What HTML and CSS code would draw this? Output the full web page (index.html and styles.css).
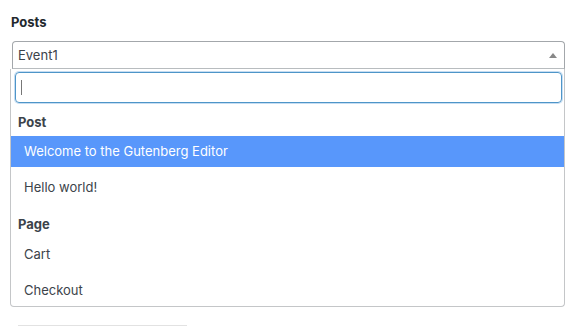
FILE: index.html
```html
<!DOCTYPE html>
<html>
<head>
<meta charset="utf-8">
<link rel="stylesheet" href="styles.css">
</head>
<body>
<div class="field">
  <div class="label">Posts</div>
  <div class="select">
    <span class="value">Event1</span>
    <span class="arrow"></span>
  </div>
  <div class="dropdown">
    <div class="search"><span class="caret"></span></div>
    <div class="group">Post</div>
    <div class="option active">Welcome to the Gutenberg Editor</div>
    <div class="option">Hello world!</div>
    <div class="group group-2">Page</div>
    <div class="option">Cart</div>
    <div class="option">Checkout</div>
  </div>
  <div class="next"></div>
</div>
</body>
</html>
```
FILE: styles.css
```css
html, body {
  margin: 0;
  padding: 0;
  background: #fff;
  font-family: Inter, "Liberation Sans", sans-serif;
  font-size: 13px;
  color: #444;
}
.field {
  padding: 14px 10px 0 10px;
  width: 555px;
}
.label {
  font-weight: 700;
  color: #23282d;
  line-height: 16px;
  padding-left: 1px;
}
.select {
  margin: 11px 0 0 2px;
  height: 26px;
  border: 1px solid #a3a7ab;
  border-bottom-color: #b8bcbf;
  border-radius: 4px 4px 0 0;
  display: flex;
  align-items: center;
  justify-content: space-between;
  padding: 0 6px 0 5px;
}
.value {
  color: #3c434a;
}
.arrow {
  width: 0;
  height: 0;
  border-left: 4px solid transparent;
  border-right: 4px solid transparent;
  border-bottom: 5px solid #888;
  margin-right: 1px;
  margin-top: 1px;
}
.dropdown {
  border: 1px solid #c4c6c8;
  border-top: none;
  border-radius: 0 0 4px 4px;
  padding: 3px 0 0 0;
  box-sizing: border-box;
  height: 238px;
}
.search {
  margin: 0 2px 0 4px;
  height: 29px;
  border: 1px solid #4e95c8;
  border-radius: 4px;
  box-shadow: 0 0 0 1px rgba(91,157,217,0.35);
  display: flex;
  align-items: center;
  padding-left: 5px;
}
.caret {
  width: 1px;
  height: 15px;
  background: #777;
}
.group {
  font-weight: 700;
  color: #3c434a;
  line-height: 20px;
  height: 20px;
  margin: 9px 0 4px 0;
  padding-left: 7px;
}
.group-2 {
  margin-top: 11px;
  margin-bottom: 5px;
}
.option {
  height: 31px;
  line-height: 31px;
  padding-left: 13px;
  color: #3c434a;
  margin-bottom: 5px;
}
.option:last-child {
  margin-bottom: 0;
}
.option.active {
  background: #5897fb;
  color: #fff;
}
.next {
  margin: 18px 0 0 8px;
  width: 169px;
  height: 4px;
  border-top: 1px solid #e2e2e2;
}
```
